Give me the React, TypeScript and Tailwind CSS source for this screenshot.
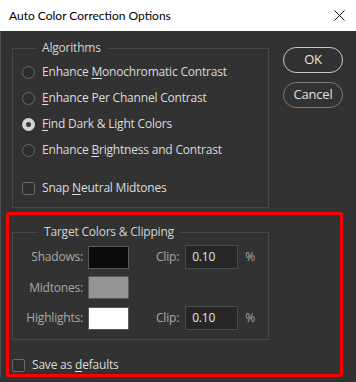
const Radio = ({ checked }: { checked?: boolean }) =>
  checked ? (
    <span className="flex h-[13px] w-[13px] shrink-0 items-center justify-center rounded-full bg-[#d4d4d4]">
      <span className="h-[5px] w-[5px] rounded-full bg-[#3a3a3a]" />
    </span>
  ) : (
    <span className="h-[13px] w-[13px] shrink-0 rounded-full border border-[#6a6a6a] bg-[#2e2e2e]" />
  );

const Check = () => (
  <span className="h-[13px] w-[13px] shrink-0 rounded-[2px] border border-[#6a6a6a] bg-[#2e2e2e]" />
);

const options: [string, string, string, boolean][] = [
  ["Enhance ", "M", "onochromatic Contrast", false],
  ["", "E", "nhance Per Channel Contrast", false],
  ["", "F", "ind Dark & Light Colors", true],
  ["Enhance ", "B", "rightness and Contrast", false],
];

const Swatch = ({ color }: { color: string }) => (
  <span className={`h-[23px] w-[41px] border border-[#5a5a5a] ${color}`} />
);

const ClipInput = () => (
  <>
    <span className="ml-[27px] text-[#a8a8a8]">Clip:</span>
    <span className="ml-[6px] flex h-[24px] w-[53px] items-center border border-[#4a4a4a] bg-[#262626] pl-[6px] text-[#e4e4e4]">
      0.10
    </span>
    <span className="ml-[7px] text-[#a8a8a8]">%</span>
  </>
);

export default function App() {
  return (
    <div className="h-[382px] w-[356px] bg-[#323232] font-['Open_Sans',sans-serif] text-[12px] tracking-[-0.2px] text-[#dcdcdc]">
      <div className="flex h-[31px] items-center justify-between bg-white pl-[9px] pr-[10px] font-['Lato',sans-serif] text-[12px] tracking-normal text-black">
        <span>Auto Color Correction Options</span>
        <svg width="11" height="11" viewBox="0 0 11 11" className="mr-[1px]">
          <path d="M0.5 0.5 L10.5 10.5 M10.5 0.5 L0.5 10.5" stroke="#111" strokeWidth="1" />
        </svg>
      </div>
      <div className="border-l border-[#505050] pl-[11px]">
        <div className="flex pt-[9px]">
          <fieldset className="w-[257px] border border-[#484848] px-[9px] pb-[6px]">
            <legend className="ml-[14px] px-[6px] leading-[16px] text-[#d4d4d4]">Algorithms</legend>
            <div className="pt-[3px]">
              {options.map(([a, u, b, c]) => (
                <div key={u + b} className="flex h-[26px] items-center gap-[7px]">
                  <Radio checked={c} />
                  <span>
                    {a}
                    <span className="underline underline-offset-2">{u}</span>
                    {b}
                  </span>
                </div>
              ))}
              <div className="mt-[12px] flex h-[26px] items-center gap-[7px]">
                <Check />
                <span>
                  Snap <span className="underline underline-offset-2">N</span>eutral Midtones
                </span>
              </div>
            </div>
          </fieldset>
          <div className="ml-[14px] flex flex-col gap-[9px] pt-[7px]">
            <button className="h-[26px] w-[60px] rounded-full border-[1.5px] border-[#c8c8c8] text-[13px] text-[#e8e8e8]">
              OK
            </button>
            <button className="h-[26px] w-[60px] rounded-full border border-[#7a7a7a] text-[13px] text-[#e0e0e0]">
              Cancel
            </button>
          </div>
        </div>
        <div className="ml-[-6px] mt-[4px] h-[165px] w-[337px] rounded-[3px] border-[3px] border-[#ff0000] pl-[3px] pt-[9px]">
          <fieldset className="w-[257px] border border-[#484848] pb-[9px] pl-[11px]">
            <legend className="ml-[14px] px-[6px] leading-[16px] text-[#d4d4d4]">
              Target Colors &amp; Clipping
            </legend>
            <div className="flex flex-col gap-[7px] pt-[5px]">
              <div className="flex items-center">
                <span className="w-[59px] text-right text-[#a8a8a8]">Shadows:</span>
                <span className="ml-[5px]" />
                <Swatch color="bg-[#0b0b0b]" />
                <ClipInput />
              </div>
              <div className="flex items-center">
                <span className="w-[59px] text-right text-[#a8a8a8]">Midtones:</span>
                <span className="ml-[5px]" />
                <Swatch color="bg-[#959595]" />
              </div>
              <div className="flex items-center">
                <span className="w-[59px] text-right text-[#a8a8a8]">Highlights:</span>
                <span className="ml-[5px]" />
                <Swatch color="bg-white" />
                <ClipInput />
              </div>
            </div>
          </fieldset>
          <div className="mt-[16px] flex items-center gap-[7px]">
            <Check />
            <span>
              Save as <span className="underline underline-offset-2">d</span>efaults
            </span>
          </div>
        </div>
      </div>
    </div>
  );
}
